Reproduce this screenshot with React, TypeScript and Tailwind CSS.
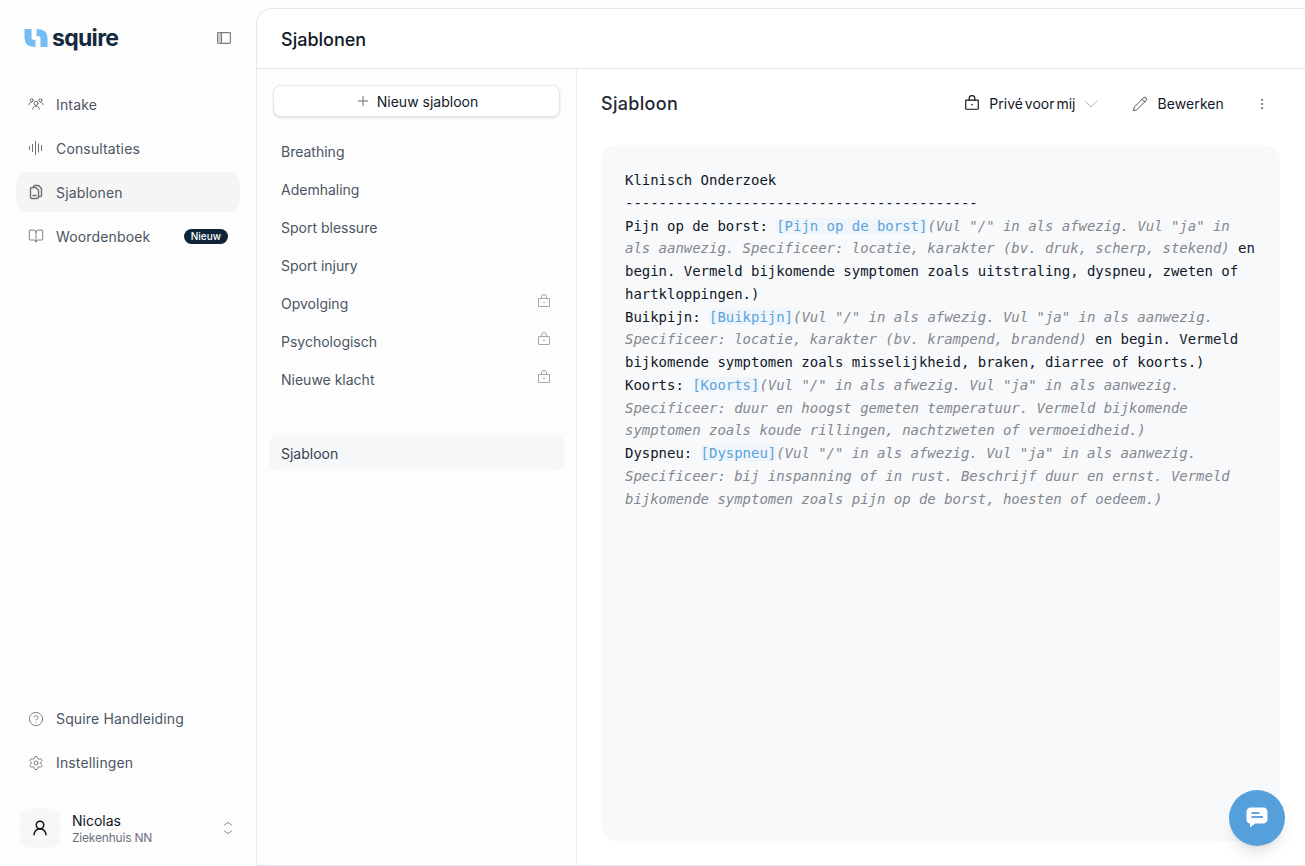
import { BookOpen, ChevronDown, CircleHelp, EllipsisVertical, Pencil, Plus, Settings, UserRound } from 'lucide-react'
import type { ReactNode } from 'react'

const sans = "font-['Inter',sans-serif]"

function IntakeIcon() {
  return (
    <svg width="16" height="16" viewBox="0 0 16 16" fill="none" stroke="currentColor" strokeWidth="1" strokeLinecap="round" strokeLinejoin="round">
      <circle cx="8" cy="7.400" r="2" />
      <path d="M4.600 13c.3-1.800 1.600-2.900 3.400-2.900s3.100 1.100 3.400 2.900" />
      <circle cx="3.600" cy="4.200" r="1.500" />
      <circle cx="12.400" cy="4.200" r="1.500" />
      <path d="M.8 8.600c.2-1.300 1.100-2.100 2.400-2.200M15.200 8.600c-.2-1.300-1.100-2.100-2.400-2.200" />
    </svg>
  )
}

function WaveIcon() {
  return (
    <svg width="16" height="16" viewBox="0 0 16 16" fill="none" stroke="currentColor" strokeWidth="1" strokeLinecap="round">
      <path d="M1.500 6.500v3M4.500 4.500v7M7.500 1.500v13M10.500 4v8M13.500 5.500v5" />
    </svg>
  )
}

function TemplatesIcon() {
  return (
    <svg width="16" height="16" viewBox="0 0 16 16" fill="none" stroke="currentColor" strokeWidth="1.400" strokeLinecap="round" strokeLinejoin="round">
      <path d="M5.500 3.500V2.800c0-.7.500-1.300 1.300-1.300h3.700l3 3v6.700c0 .7-.5 1.300-1.300 1.300h-.7" />
      <path d="M2.500 5c0-.8.600-1.500 1.500-1.500h3.800l2.700 2.800V13c0 .8-.7 1.500-1.500 1.500H4c-.9 0-1.500-.7-1.500-1.500z" />
      <path d="M5 11.500h3" />
    </svg>
  )
}

function LockIcon({ className, size = 14 }: { className?: string; size?: number }) {
  return (
    <svg className={className} width={size} height={size} viewBox="0 0 14 14" fill="none" stroke="currentColor" strokeWidth="1" strokeLinecap="round">
      <rect x="1.500" y="4.500" width="11" height="8" rx="0.500" />
      <path d="M4.500 4.500V3a2.500 2.500 0 0 1 5 0v1.500" />
      <path d="M6.500 8.500h1" />
    </svg>
  )
}

function SideItem({ icon, label, active, badge, low }: { icon: ReactNode; label: string; active?: boolean; badge?: string; low?: boolean }) {
  return (
    <div className={`flex h-10 items-center gap-3 rounded-xl px-3 ${active ? 'bg-[#f5f5f5]' : ''}`}>
      <span className="flex w-4 justify-center text-[#6b6f74]">{icon}</span>
      <span className={`text-sm tracking-[0.15px] text-[#4b5563] ${low ? 'pt-0.5' : ''}`}>{label}</span>
      {badge && (
        <span className="ml-auto rounded-full bg-[#0f2537] px-[7px] py-px text-[10px] leading-[13px] font-medium text-white">{badge}</span>
      )}
    </div>
  )
}

const templates = [
  { name: 'Breathing' },
  { name: 'Ademhaling' },
  { name: 'Sport blessure' },
  { name: 'Sport injury' },
  { name: 'Opvolging', locked: true },
  { name: 'Psychologisch', locked: true },
  { name: 'Nieuwe klacht', locked: true },
]

function Tag({ children }: { children: ReactNode }) {
  return <span className="rounded-sm bg-[#eff5fb] text-[#5ba3dd]">{children}</span>
}

function Hint({ children }: { children: ReactNode }) {
  return <em className="text-[#83888e]">{children}</em>
}

export default function App() {
  return (
    <div className={`flex h-[866px] w-[1305px] overflow-hidden bg-[#fdfdfe] ${sans}`}>
      {/* Sidebar */}
      <aside className="flex w-[256px] shrink-0 flex-col px-4">
        <div className="flex h-[76px] items-center justify-between pr-2 pl-2">
          <div className="flex items-center gap-1">
            <svg width="24" height="18" viewBox="0 0 24 18" fill="none" stroke="#75bdf5" strokeWidth="7">
              <path d="M4 0V9C4 13 7 14.500 11.500 14.500" />
              <path d="M20 18V9C20 5 17 3.500 12.500 3.500" />
            </svg>
            <span className="text-[23px] leading-none font-bold tracking-[-0.7px] text-[#14293d]">squire</span>
          </div>
          <svg width="16" height="16" viewBox="0 0 16 16" fill="none" stroke="#7b7f84" strokeWidth="1.200">
            <rect x="1.600" y="2.600" width="12.800" height="10.800" rx="0.800" />
            <rect x="2.200" y="3.200" width="3" height="9.600" fill="#c9cbcd" stroke="none" />
            <path d="M5.500 2.600v10.800" />
          </svg>
        </div>
        <nav className="mt-2 flex flex-col gap-1">
          <SideItem icon={<IntakeIcon />} label="Intake" low />
          <SideItem icon={<WaveIcon />} label="Consultaties" low />
          <SideItem icon={<TemplatesIcon />} label="Sjablonen" active low />
          <SideItem icon={<BookOpen size={16} strokeWidth={1.300} />} label="Woordenboek" badge="Nieuw" low />
        </nav>
        <nav className="mt-auto flex flex-col gap-1">
          <SideItem icon={<CircleHelp size={16} strokeWidth={1.300} />} label="Squire Handleiding" />
          <SideItem icon={<Settings size={16} strokeWidth={1.300} />} label="Instellingen" />
        </nav>
        <div className="mt-[25px] mb-[18px] flex items-center gap-3 pr-[7px] pl-1">
          <div className="flex size-10 items-center justify-center rounded-xl bg-[#f6f7f7]">
            <UserRound size={18} strokeWidth={2} className="text-[#111]" />
          </div>
          <div className="flex-1 pt-0.5">
            <div className="text-sm leading-[18px] text-[#0f1720]">Nicolas</div>
            <div className="text-xs leading-4 tracking-[-0.2px] text-[#6b7280]">Ziekenhuis NN</div>
          </div>
          <svg width="10" height="16" viewBox="0 0 10 16" fill="none" stroke="#85898d" strokeWidth="1" strokeLinecap="round" strokeLinejoin="round">
            <path d="M1.500 5 5 2.500 8.500 5M1.500 11 5 13.500 8.500 11" />
          </svg>
        </div>
      </aside>

      {/* Main panel */}
      <main className="mt-2 flex min-w-0 flex-1 flex-col rounded-tl-2xl border border-r-0 border-[#e5e7eb] bg-white">
        <header className="flex h-[60px] shrink-0 items-center border-b border-[#e5e7eb] px-6">
          <h1 className="pt-0.5 text-lg font-medium text-[#111827]">Sjablonen</h1>
        </header>
        <div className="flex min-h-0 flex-1">
          {/* Template list */}
          <section className="flex w-[320px] shrink-0 flex-col border-r border-[#ebedf0] bg-[#fdfdfd] px-3 pt-4">
            <button className="mx-1 flex h-8 items-center justify-center gap-1.5 rounded-lg border border-[#e5e7eb] bg-white text-sm text-[#111827] shadow-sm">
              <Plus size={16} strokeWidth={1.500} className="text-[#6b6b6b]" />
              <span className="pt-0.5">Nieuw sjabloon</span>
            </button>
            <ul className="mt-4 flex flex-col gap-0.5">
              {templates.map((t) => (
                <li key={t.name} className="flex h-9 items-center justify-between px-3 text-sm text-[#4b5563]">
                  <span className="pt-0.5">{t.name}</span>
                  {t.locked && <LockIcon className="mr-px mb-1 text-[#a3a6aa]" />}
                </li>
              ))}
            </ul>
            <div className="mt-[38px] flex h-9 items-center rounded-lg bg-[#f6f7f8] px-3 text-sm text-[#374151]">
              <span className="pt-0.5">Sjabloon</span>
            </div>
          </section>

          {/* Template detail */}
          <section className="flex min-w-0 flex-1 flex-col pr-[25px] pl-6">
            <div className="flex h-[76px] shrink-0 items-center pb-1.5">
              <h2 className="text-lg font-medium tracking-[0.3px] text-[#1f2937]">Sjabloon</h2>
              <div className="ml-auto flex items-center text-sm text-[#111827]">
                <LockIcon size={16} className="mr-[9px] mb-0.5 text-[#111]" />
                <span className="[word-spacing:-2px]">Privé voor mij</span>
                <ChevronDown size={24} strokeWidth={0.8} className="ml-1 text-[#9ca3af]" />
                <Pencil size={16} strokeWidth={1.100} className="mr-[9px] ml-[29px]" />
                <span className="tracking-[0.1px]">Bewerken</span>
                <EllipsisVertical size={14} strokeWidth={1.500} className="mr-[11px] ml-[31px] text-[#555]" />
              </div>
            </div>
            <div className="mb-6 flex-1 rounded-2xl bg-[#f8f9fb] px-6 pt-6 font-['DejaVu_Sans_Mono',monospace] text-sm leading-[22.75px] tracking-[-0.03px] whitespace-pre-wrap text-[#111827]">
              Klinisch Onderzoek{'\n'}
              ------------------------------------------{'\n'}
              Pijn op de borst: <Tag>[Pijn op de borst]</Tag>
              <Hint>(Vul "/" in als afwezig. Vul "ja" in als aanwezig. Specificeer: locatie, karakter (bv. druk, scherp, stekend)</Hint> en begin. Vermeld bijkomende symptomen zoals uitstraling, dyspneu, zweten of hartkloppingen.){'\n'}
              Buikpijn: <Tag>[Buikpijn]</Tag>
              <Hint>(Vul "/" in als afwezig. Vul "ja" in als aanwezig. Specificeer: locatie, karakter (bv. krampend, brandend)</Hint> en begin. Vermeld bijkomende symptomen zoals misselijkheid, braken, diarree of koorts.){'\n'}
              Koorts: <Tag>[Koorts]</Tag>
              <Hint>(Vul "/" in als afwezig. Vul "ja" in als aanwezig. Specificeer: duur en hoogst gemeten temperatuur. Vermeld bijkomende symptomen zoals koude rillingen, nachtzweten of vermoeidheid.)</Hint>{'\n'}
              Dyspneu: <Tag>[Dyspneu]</Tag>
              <Hint>(Vul "/" in als afwezig. Vul "ja" in als aanwezig. Specificeer: bij inspanning of in rust. Beschrijf duur en ernst. Vermeld bijkomende symptomen zoals pijn op de borst, hoesten of oedeem.)</Hint>
            </div>
          </section>
        </div>
      </main>

      {/* Chat launcher */}
      <button className="absolute top-[790px] left-[1229px] flex size-14 items-center justify-center rounded-full bg-[#559fdb] shadow-lg">
        <svg width="24" height="24" viewBox="0 0 24 24">
          <path d="M5.500 1.500h13c2.200 0 4 1.800 4 4v8c0 2.200-1.800 4-4 4H10l-5 4v-4c-2.200 0-3.500-1.800-3.500-4v-8c0-2.200 1.800-4 4-4z" fill="#fff" />
          <path d="M6.500 7h8" stroke="#559fdb" strokeWidth="1.800" />
          <path d="M6.500 11h11.500" stroke="#559fdb" strokeWidth="1.800" />
        </svg>
      </button>
    </div>
  )
}
